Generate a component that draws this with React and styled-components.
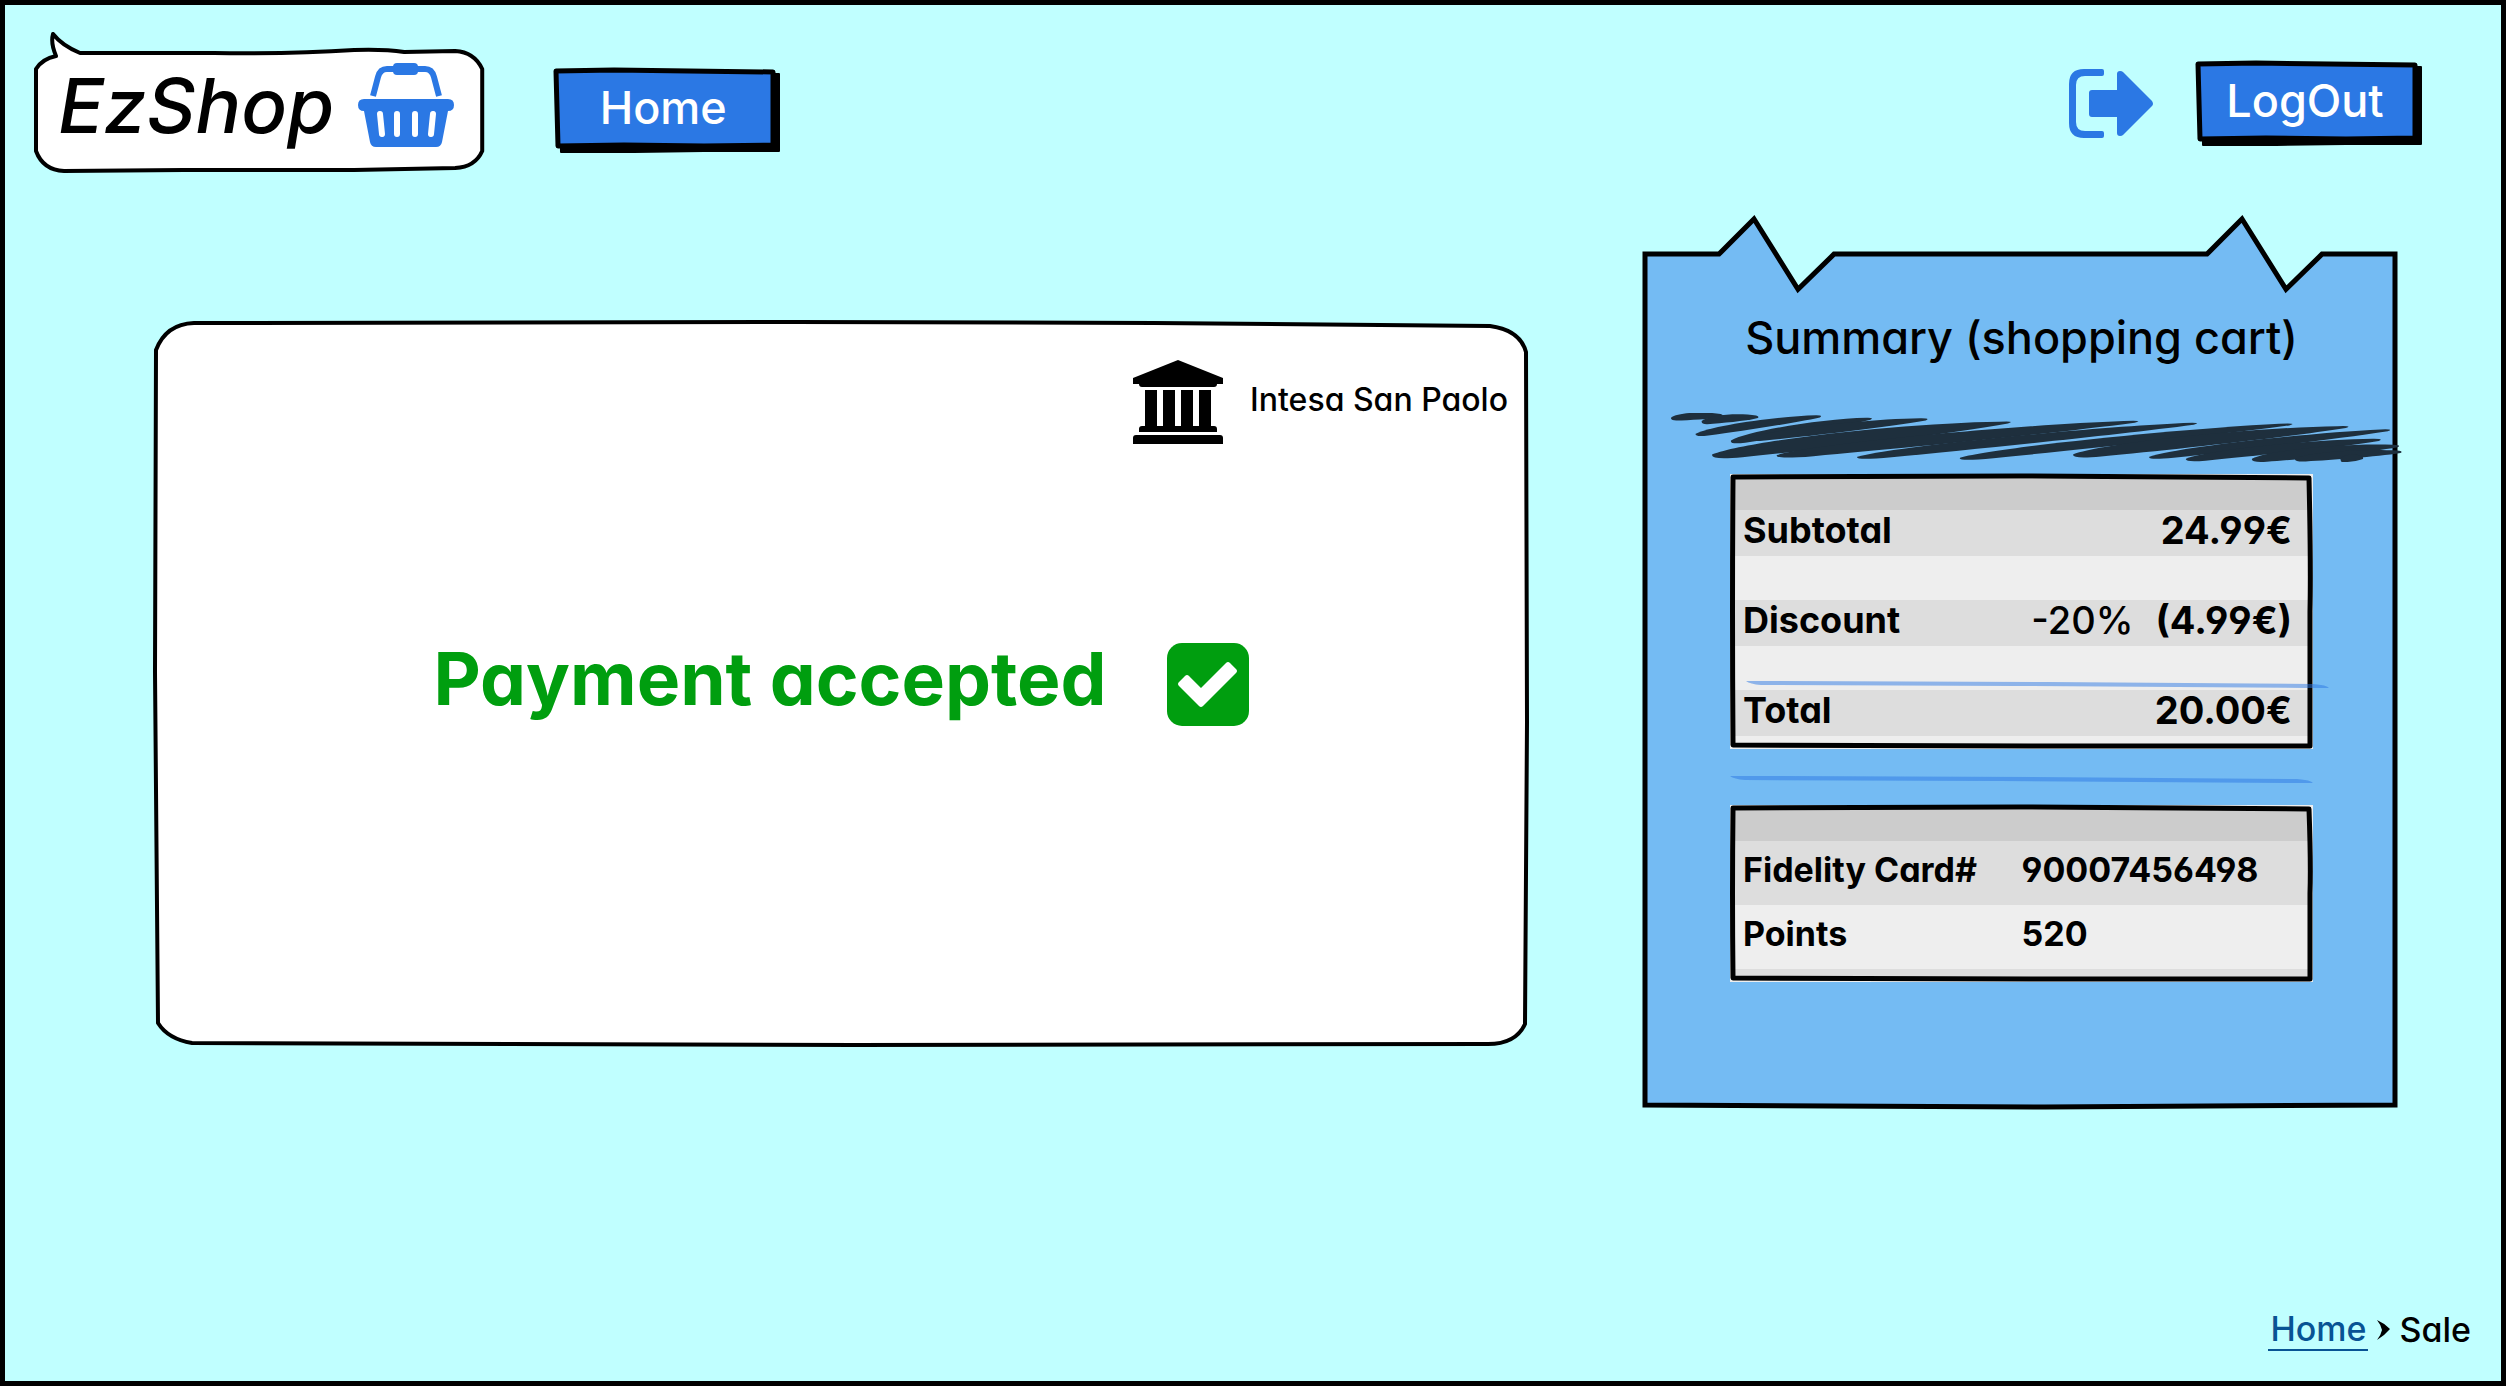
import React from "react";
import styled, { createGlobalStyle } from "styled-components";

const ink = "#000000";
const blue = "#2b78e4";
const sky = "#c0ffff";
const paper = "#74bbf3";
const green = "#009e0f";

const GlobalStyle = createGlobalStyle`
  *, *::before, *::after { box-sizing: border-box; }
  body {
    margin: 0;
    background: ${ink};
    color: ${ink};
    font-family: Inter, "Open Sans", sans-serif;
    font-weight: 500;
    font-feature-settings: "cv11", "cv03", "cv04";
  }
`;

const Page = styled.div`
  min-height: 100vh;
  display: flex;
  flex-direction: column;
  border: 5px solid ${ink};
  background: ${sky};
`;

const Header = styled.header`
  display: flex;
  justify-content: space-between;
  align-items: flex-start;
  padding: 44px 79px 0 29px;
`;

const Group = styled.div`
  display: flex;
  align-items: center;
  gap: ${(p) => p.$gap}px;
  padding-top: ${(p) => p.$top || 0}px;
`;

const Outline = styled.svg`
  position: absolute;
  inset: 0;
  width: 100%;
  height: 100%;
  overflow: visible;
  pointer-events: none;

  path {
    stroke: ${ink};
    stroke-linejoin: ${(p) => p.$join || "round"};
    vector-effect: non-scaling-stroke;
  }
`;

const Brand = styled.div`
  position: relative;
  display: flex;
  align-items: center;
  gap: 24px;
  height: 124px;
  padding: 0 30px 12px 24px;
`;

const BrandName = styled.span`
  position: relative;
  font-size: 76px;
  line-height: 96px;
  font-style: italic;
`;

const Icon = styled.svg`
  position: relative;
  display: block;
  flex: none;
  width: ${(p) => p.$w}px;
  height: ${(p) => p.$h}px;
`;

const ShadowButton = styled.button`
  position: relative;
  min-width: 226px;
  height: 86px;
  padding: 0 8px 6px 0;
  border: 0;
  background: none;
  color: #ffffff;
  font: inherit;
  font-size: 45px;
  line-height: 60px;
  cursor: pointer;
`;

const ButtonLabel = styled.span`
  position: relative;
`;

const Main = styled.main`
  display: grid;
  grid-template-columns: minmax(0, 1374fr) minmax(0, 753fr);
  gap: 117px;
  align-items: start;
  padding: 45px 103px 0 149px;
`;

const Panel = styled.section`
  position: relative;
  display: grid;
  min-height: 724px;
  margin-top: 104px;
`;

const Bank = styled.div`
  position: relative;
  grid-area: 1 / 1;
  align-self: start;
  justify-self: end;
  display: flex;
  align-items: center;
  gap: 27px;
  padding: 38px 20px 0 0;
`;

const BankName = styled.span`
  padding-bottom: 4px;
  font-size: 32px;
  line-height: 40px;
`;

const Status = styled.div`
  position: relative;
  grid-area: 1 / 1;
  place-self: center;
  display: flex;
  align-items: center;
  gap: 60px;
`;

const StatusText = styled.h1`
  margin: 0;
  padding-bottom: 10px;
  color: ${green};
  font-size: 73px;
  line-height: 96px;
  font-weight: 700;
`;

const Paper = styled.aside`
  position: relative;
  display: flex;
  flex-direction: column;
  padding: 90px 85px 127px;
`;

const PaperTitle = styled.h2`
  position: relative;
  margin: 0;
  text-align: center;
  white-space: nowrap;
  font-size: 45px;
  line-height: 60px;
  font-weight: 500;
`;

const Scribble = styled.svg`
  position: relative;
  display: block;
  height: 49px;
  margin: 45px -90px 12px -59px;
`;

const TableBox = styled.div`
  position: relative;
  padding: 5px;
  background: #eeeeee;
`;

const Table = styled.table`
  width: 100%;
  border-collapse: collapse;
  table-layout: fixed;
  font-size: ${(p) => p.$size}px;
  line-height: 40px;
  font-weight: 700;
`;

const HeadCell = styled.td`
  height: 31px;
  padding: 0;
  background: #cccccc;
`;

const Band = styled.td`
  height: ${(p) => p.$h}px;
  padding: 0;
  background: ${(p) => (p.$dark ? "#dddddd" : "#eeeeee")};
`;

const Row = styled.tr`
  height: ${(p) => p.$h}px;
  background: ${(p) => (p.$dark ? "#dddddd" : "#eeeeee")};
`;

const NameCell = styled.th`
  width: ${(p) => p.$w};
  padding: 0 0 6px 8px;
  text-align: left;
  font-weight: 700;
  white-space: nowrap;
`;

const ValueCell = styled.td`
  padding: 0 16px 6px 0;
  text-align: left;
  white-space: nowrap;
`;

const AmountCell = styled(ValueCell)`
  text-align: right;
  font-size: 38px;
`;

const Rate = styled.span`
  margin-right: 22px;
  font-weight: 500;
`;

const Rule = styled.svg`
  position: relative;
  display: block;
  width: 100%;
  height: 7px;
  margin: 27px 0 22px;
`;

const TotalRule = styled.svg`
  position: absolute;
  left: 16px;
  top: 207px;
  width: 100%;
  height: 7px;
`;

const Footer = styled.footer`
  margin-top: auto;
  display: flex;
  justify-content: flex-end;
  align-items: center;
  gap: 9px;
  padding: 0 30px 29px 0;
  font-size: 34px;
  line-height: 44px;
`;

const Crumb = styled.a`
  color: #085394;
  border-bottom: 2px solid #085394;
  line-height: 40px;
  padding: 0 2px;
  text-decoration: none;
`;

function ButtonFrame() {
  return (
    <Outline viewBox="0 0 226 86" preserveAspectRatio="none" aria-hidden="true">
      <path d="M6 6 H225 V83 L150 83 L80 84 L7 84 Z" fill={ink} strokeWidth="2" />
      <path d="M2 3 L60 2 L219 4 V77 L150 78 L70 77 L4 78 Z" fill={blue} strokeWidth="5" />
    </Outline>
  );
}

function BasketIcon() {
  return (
    <Icon $w={96} $h={84} viewBox="0 0 96 84" aria-hidden="true">
      <path d="M15 33 L20 14 Q22 6 29 6 H67 Q74 6 76 14 L81 33" fill="none" stroke={blue} strokeWidth="6" />
      <rect x="35" y="0" width="25" height="12" rx="4" fill={blue} />
      <path d="M6 36 H90 Q96 36 96 42 Q96 48 90 48 L84 79 Q83 84 78 84 H18 Q13 84 12 79 L6 48 Q0 48 0 42 Q0 36 6 36 Z" fill={blue} />
      <path d="M22 51 L24 71 M39 51 V71 M57 51 V71 M75 51 L73 71" stroke="#ffffff" strokeWidth="6" strokeLinecap="round" />
    </Icon>
  );
}

function ExitIcon() {
  return (
    <Icon $w={84} $h={70} viewBox="0 0 84 70" aria-hidden="true">
      <path d="M33 0 Q35 0 35 2 V5 Q35 7 33 7 H16 Q7 7 7 16 V53 Q7 62 16 62 H33 Q35 62 35 64 V67 Q35 69 33 69 H15 Q0 69 0 54 V15 Q0 0 15 0 Z" fill={blue} />
      <path d="M23 21 H48 V5 Q48 2 51 2 Q53 2 54 3 L83 32 Q85 35 83 37 L54 66 Q53 67 51 67 Q48 67 48 64 V48 H23 Q20 48 20 45 V24 Q20 21 23 21 Z" fill={blue} />
    </Icon>
  );
}

function BankIcon() {
  return (
    <Icon $w={90} $h={84} viewBox="0 0 90 84" aria-hidden="true">
      <path d="M45 0 L90 18 V24 H84 Q84 27 81 27 H9 Q6 27 6 24 H0 V18 Z" />
      <path d="M12 30 H24 V66 H30 V30 H42 V66 H48 V30 H60 V66 H66 V30 H78 V66 H81 Q84 66 84 69 V72 H6 V69 Q6 66 9 66 H12 Z" />
      <path d="M3 75 H87 Q90 75 90 78 V84 H0 V78 Q0 75 3 75 Z" />
    </Icon>
  );
}

function CheckIcon() {
  return (
    <Icon $w={82} $h={83} viewBox="0 0 82 83" role="img" aria-label="Accepted">
      <rect width="82" height="83" rx="15" fill={green} />
      <path d="M12 39 L18 33 Q20 31 22 33 L34 45 L59 20 Q61 18 63 20 L69 26 Q71 28 69 30 L36 63 Q34 65 32 63 L12 43 Q10 41 12 39 Z" fill="#ffffff" />
    </Icon>
  );
}

/* Each stroke: blunt end x, y, pointed end x, y, thickness. */
const scribbleStrokes = [
  [33, 36, 190, 30, 14],
  [125, 46, 297, 34, 16],
  [107, 84, 487, 31, 16],
  [213, 104, 640, 38, 20],
  [260, 98, 808, 40, 18],
  [157, 145, 1062, 48, 28],
  [351, 147, 1446, 46, 21],
  [592, 152, 1622, 52, 18],
  [900, 155, 1908, 54, 18],
  [1240, 145, 2074, 62, 23],
  [1468, 152, 2198, 72, 17],
  [1578, 158, 2168, 101, 18],
  [1776, 158, 2222, 120, 20],
  [1905, 158, 2228, 138, 16],
  [2042, 160, 2110, 156, 14],
];

function strokePath([x1, y1, x2, y2, t]) {
  const dx = x2 - x1;
  const dy = y2 - y1;
  const at = (s, off) => `${x1 + dx * s} ${y1 + dy * s + off}`;
  return (
    `M${x1} ${y1} C${at(0.12, -t * 1.1)} ${at(0.65, -t * 1.1)} ${at(0.95, -5)}` +
    ` Q${at(1.01, -2)} ${at(0.98, 3)}` +
    ` C${at(0.75, t * 0.6)} ${at(0.35, t * 0.7)} ${at(0.1, t * 0.65)}` +
    ` Q${at(-0.01, t * 0.6)} ${x1} ${y1} Z`
  );
}

function TableFrame({ height }) {
  const h = height;
  return (
    <Outline viewBox={`0 0 582 ${h}`} preserveAspectRatio="none" aria-hidden="true">
      <path
        d={`M3 3 L290 2 L578 4 Q580 ${h / 3} 579 ${h / 2} L579 ${h - 3} L300 ${h - 3} L3 ${h - 4} Q2 ${h / 2} 3 3 Z`}
        fill="none"
        strokeWidth="5"
      />
    </Outline>
  );
}

const ruleShape = "M0 0 H15 L300 1 L566 3 Q580 4 582 7 H560 L270 5 L15 4 Q4 3 0 0 Z";

export default function App() {
  return (
    <>
      <GlobalStyle />
      <Page>
        <Header>
          <Group $gap={70}>
            <Brand>
              <Outline viewBox="0 0 450 124" preserveAspectRatio="none" aria-hidden="true">
                <path
                  d="M2 20 Q8 10 22 7 C19 0 17 -8 19 -15 C26 -6 34 -1 46 4 L180 4 Q260 5 320 1 Q350 0 370 3 L421 2 Q440 3 448 20 V102 Q441 118 421 119 L320 121 L150 121 L30 122 Q9 121 2 102 Z"
                  fill="#ffffff"
                  strokeWidth="4"
                />
              </Outline>
              <BrandName>EzShop</BrandName>
              <BasketIcon />
            </Brand>
            <ShadowButton type="button">
              <ButtonFrame />
              <ButtonLabel>Home</ButtonLabel>
            </ShadowButton>
          </Group>
          <Group $gap={43} $top={12}>
            <ExitIcon />
            <ShadowButton type="button">
              <ButtonFrame />
              <ButtonLabel>LogOut</ButtonLabel>
            </ShadowButton>
          </Group>
        </Header>

        <Main>
          <Panel>
            <Outline viewBox="0 0 1374 724" preserveAspectRatio="none" aria-hidden="true">
              <path
                d="M2 28 Q12 2 40 1 L640 0 L1000 1 L1336 4 Q1366 8 1372 30 L1373 400 L1371 702 Q1362 722 1334 722 L700 723 L38 721 Q14 717 4 701 L1 350 Z"
                fill="#ffffff"
                strokeWidth="4"
              />
            </Outline>
            <Bank>
              <BankIcon />
              <BankName>Intesa San Paolo</BankName>
            </Bank>
            <Status role="status">
              <StatusText>Payment accepted</StatusText>
              <CheckIcon />
            </Status>
          </Panel>

          <Paper>
            <Outline $join="miter" viewBox="0 0 753 888" preserveAspectRatio="none" aria-hidden="true">
              <path d="M0 36 L74 36 L109 1 L153 71 L189 36 H562 L597 1 L641 71 L677 36 H750 L750 884 L400 886 L0 884 Z" fill={paper} strokeWidth="5" />
            </Outline>
            <PaperTitle>Summary (shopping cart)</PaperTitle>
            <Scribble viewBox="33 22 2196 146" preserveAspectRatio="none" aria-hidden="true">
              {scribbleStrokes.map((s) => (
                <path key={s[0]} d={strokePath(s)} fill="#1e2f3d" />
              ))}
            </Scribble>
            <TableBox>
              <Table $size={36}>
                <tbody>
                  <tr><HeadCell colSpan={2} /></tr>
                  <Row $h={46} $dark>
                    <NameCell $w="40%" scope="row">Subtotal</NameCell>
                    <AmountCell>24.99€</AmountCell>
                  </Row>
                  <tr><Band $h={44} colSpan={2} /></tr>
                  <Row $h={46} $dark>
                    <NameCell $w="40%" scope="row">Discount</NameCell>
                    <AmountCell><Rate>-20%</Rate>(4.99€)</AmountCell>
                  </Row>
                  <tr><Band $h={44} colSpan={2} /></tr>
                  <Row $h={46} $dark>
                    <NameCell $w="40%" scope="row">Total</NameCell>
                    <AmountCell>20.00€</AmountCell>
                  </Row>
                  <tr><Band $h={8} colSpan={2} /></tr>
                </tbody>
              </Table>
              <TableFrame height={275} />
              <TotalRule viewBox="0 0 582 7" preserveAspectRatio="none" aria-hidden="true">
                <path d={ruleShape} fill={blue} opacity="0.5" />
              </TotalRule>
            </TableBox>
            <Rule viewBox="0 0 582 7" preserveAspectRatio="none" aria-hidden="true">
              <path d={ruleShape} fill={blue} opacity="0.5" />
            </Rule>
            <TableBox>
              <Table $size={34}>
                <tbody>
                  <tr><HeadCell colSpan={2} /></tr>
                  <Row $h={64} $dark>
                    <NameCell $w="50%" scope="row">Fidelity Card#</NameCell>
                    <ValueCell>90007456498</ValueCell>
                  </Row>
                  <Row $h={64}>
                    <NameCell $w="50%" scope="row">Points</NameCell>
                    <ValueCell>520</ValueCell>
                  </Row>
                  <tr><Band $h={8} $dark colSpan={2} /></tr>
                </tbody>
              </Table>
              <TableFrame height={177} />
            </TableBox>
          </Paper>
        </Main>

        <Footer>
          <Crumb href="#home">Home</Crumb>
          <Icon $w={13} $h={20} viewBox="0 0 13 20" aria-hidden="true">
            <path d="M0 0 Q7 3 13 9 Q7 16 0 20 Q4 15 5 10 Q4 5 0 0 Z" />
          </Icon>
          <span>Sale</span>
        </Footer>
      </Page>
    </>
  );
}
